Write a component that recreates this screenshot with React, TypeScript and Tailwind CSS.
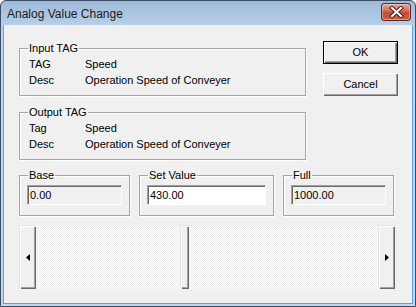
import React from "react";

const face = "font-['Liberation_Sans',Arial,sans-serif] text-[11px] text-black";

const Group: React.FC<{ title: string; className?: string; children: React.ReactNode }> = ({ title, className = "", children }) => (
  <fieldset className={`border border-[#a5a5a5] shadow-[inset_1px_1px_0_#fff,1px_1px_0_#fff] px-0 ${className}`}>
    <legend className="ml-[8px] px-[1px] leading-[13px]">{title}</legend>
    {children}
  </fieldset>
);

const Row: React.FC<{ label: string; value: string }> = ({ label, value }) => (
  <div className="flex leading-[16px] pl-[9px]">
    <span className="w-[56px]">{label}</span>
    <span>{value}</span>
  </div>
);

const Field: React.FC<{ value: string; editable?: boolean }> = ({ value, editable }) => (
  <div
    className={`mx-[7px] mt-[3px] h-[20px] border border-t-[#a0a0a0] border-l-[#a0a0a0] border-b-white border-r-white shadow-[inset_1px_1px_0_#696969] pl-[2px] leading-[18px] ${editable ? "bg-white" : "bg-[#f0f0f0]"}`}
  >
    {value}
  </div>
);

const WinButton: React.FC<{ label: string; isDefault?: boolean; className?: string }> = ({ label, isDefault, className = "" }) => (
  <button
    className={`w-[75px] h-[23px] bg-[#f0f0f0] ${isDefault ? "border border-black shadow-[inset_1px_1px_0_#fff,inset_-1px_-1px_0_#696969,inset_-2px_-2px_0_#a0a0a0]" : "shadow-[inset_1px_1px_0_#fff,inset_-1px_-1px_0_#696969,inset_-2px_-2px_0_#a0a0a0]"} ${className}`}
  >
    {label}
  </button>
);

const ScrollButton: React.FC<{ dir: "left" | "right"; className?: string }> = ({ dir, className = "" }) => (
  <div className={`w-[17px] h-full bg-[#f0f0f0] shadow-[inset_1px_1px_0_#e3e3e3,inset_2px_2px_0_#fff,inset_-1px_-1px_0_#696969,inset_-2px_-2px_0_#a0a0a0] flex items-center justify-center ${className}`}>
    <svg width="4" height="7" viewBox="0 0 4 7">
      {dir === "left" ? <path d="M4 0V7L0 3.5Z" fill="#000" /> : <path d="M0 0V7L4 3.5Z" fill="#000" />}
    </svg>
  </div>
);

export default function App() {
  return (
    <div className={`w-[416px] h-[307px] border border-[#3d4f66] rounded-t-[6px] bg-[linear-gradient(#9fbad8,#bdd4ec_30px,#bfd5ec)] flex flex-col overflow-hidden ${face}`}>
      {/* Title bar */}
      <div className="h-[24px] flex items-center shrink-0">
        <span className="ml-[6px] text-[12px] text-[#1b1b1b] leading-[24px] pt-[1px]">Analog Value Change</span>
        <button className="ml-auto mr-[4px] mt-[-2px] w-[30px] h-[18px] rounded-[3px] border border-[#5b2620] bg-[linear-gradient(#e6a596,#d06a55_45%,#c24a34_55%,#c8634d)] shadow-[inset_0_0_0_1px_rgba(255,255,255,0.35)] flex items-center justify-center">
          <svg width="15" height="12" viewBox="0 0 15 12">
            <path d="M3 2L12 10M12 2L3 10" stroke="#4a1e19" strokeWidth="4" strokeLinecap="square" />
            <path d="M3 2L12 10M12 2L3 10" stroke="#fff" strokeWidth="2" strokeLinecap="square" />
          </svg>
        </button>
      </div>

      {/* Client area */}
      <div className="mx-[2px] mb-[2px] flex-1 bg-[#f0f0f0] border-x border-b border-[#5aa5de] pl-[15px] pt-[17px]">
        <div className="flex">
          <div className="w-[287px] flex flex-col">
            <Group title="Input TAG" className="pt-[1px] pb-[7px]">
              <Row label="TAG" value="Speed" />
              <Row label="Desc" value="Operation Speed of Conveyer" />
            </Group>
            <Group title="Output TAG" className="mt-[10px] pt-[1px] pb-[7px]">
              <Row label="Tag" value="Speed" />
              <Row label="Desc" value="Operation Speed of Conveyer" />
            </Group>
          </div>
          <div className="ml-[17px] flex flex-col mt-[-1px]">
            <WinButton label="OK" isDefault />
            <WinButton label="Cancel" className="mt-[9px]" />
          </div>
        </div>

        <div className="flex mt-[9px]">
          <Group title="Base" className="w-[111px] pb-[10px]">
            <Field value="0.00" />
          </Group>
          <Group title="Set Value" className="w-[135px] ml-[9px] pb-[10px]">
            <Field value="430.00" editable />
          </Group>
          <Group title="Full" className="w-[111px] ml-[9px] pb-[10px]">
            <Field value="1000.00" />
          </Group>
        </div>

        {/* Horizontal scroll bar */}
        <div className="mt-[9px] w-[376px] h-[64px] flex bg-[image:repeating-conic-gradient(#ffffff_0%_25%,#ebebeb_0%_50%)] bg-[length:2px_2px]">
          <ScrollButton dir="left" />
          <div className="w-[144px]" />
          <div className="w-[9px] h-full bg-[#f0f0f0] shadow-[inset_1px_1px_0_#e3e3e3,inset_2px_2px_0_#fff,inset_-1px_-1px_0_#696969,inset_-2px_-2px_0_#a0a0a0]" />
          <div className="flex-1" />
          <ScrollButton dir="right" />
        </div>
      </div>
    </div>
  );
}
